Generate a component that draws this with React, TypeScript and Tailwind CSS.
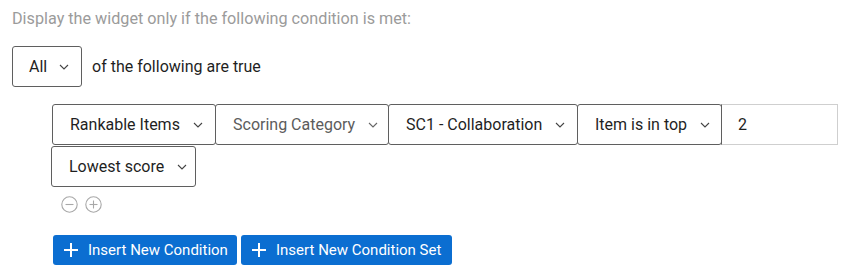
import React from "react";

const Chevron = ({ color = "#444" }: { color?: string }) => (
  <svg width="10" height="6" viewBox="0 0 10 6" className="shrink-0">
    <polyline points="1,1 5,5 9,1" fill="none" stroke={color} strokeWidth="1.1" />
  </svg>
);

const Select = ({
  label,
  width,
  muted = false,
  className = "",
}: {
  label: string;
  width: string;
  muted?: boolean;
  className?: string;
}) => (
  <div
    className={`flex items-center gap-[13px] h-[41px] pl-[17px] border border-[#5f5f5f] rounded-[3px] bg-white ${width} ${className}`}
  >
    <span className={muted ? "text-[#5c5c5c]" : "text-[#1f1f1f]"}>{label}</span>
    <Chevron color={muted ? "#666" : "#444"} />
  </div>
);

const CircleIcon = ({ plus }: { plus?: boolean }) => (
  <svg width="17" height="17" viewBox="0 0 17 17">
    <circle cx="8.5" cy="8.5" r="7.7" fill="none" stroke="#a8a8a8" strokeWidth="1.1" />
    <line x1="4.5" y1="8.5" x2="12.5" y2="8.5" stroke="#a8a8a8" strokeWidth="1.1" />
    {plus && <line x1="8.5" y1="4.5" x2="8.5" y2="12.5" stroke="#a8a8a8" strokeWidth="1.1" />}
  </svg>
);

const PlusIcon = () => (
  <svg width="14" height="14" viewBox="0 0 14 14" className="shrink-0">
    <line x1="0" y1="7" x2="14" y2="7" stroke="white" strokeWidth="2" />
    <line x1="7" y1="0" x2="7" y2="14" stroke="white" strokeWidth="2" />
  </svg>
);

export default function App() {
  return (
    <div
      className="w-[850px] h-[275px] bg-white px-[12px] pt-[9px] text-[16px]"
      style={{ fontFamily: "Roboto, 'Noto Sans', sans-serif" }}
    >
      <p className="text-[#9b9b9b] leading-[20px] text-[16.2px]">
        Display the widget only if the following condition is met:
      </p>

      <div className="flex items-center gap-[10px] mt-[17px]">
        <div className="flex items-center gap-[12px] w-[70px] h-[41px] pl-[16px] border border-[#5f5f5f] rounded-[3px] text-[#1f1f1f]">
          <span>All</span>
          <Chevron />
        </div>
        <span className="text-[#1f1f1f]">of the following are true</span>
      </div>

      <div className="ml-[40px] mt-[17px] w-[790px] flex flex-wrap gap-y-[1px]">
        <Select label="Rankable Items" width="w-[164px]" />
        <Select label="Scoring Category" width="w-[174px]" muted className="-ml-px" />
        <Select label="SC1 - Collaboration" width="w-[190px]" className="-ml-px" />
        <Select label="Item is in top" width="w-[145px]" className="-ml-px" />
        <div className="flex items-center h-[41px] w-[117px] -ml-px pl-[16px] border border-[#cfcfcf] border-l-[#5f5f5f] text-[#1f1f1f]">
          2
        </div>
        <Select label="Lowest score" width="w-[145px]" className="-ml-px" />
      </div>

      <div className="ml-[49px] mt-[9px] flex items-center gap-[7px]">
        <CircleIcon />
        <CircleIcon plus />
      </div>

      <div className="ml-[41px] mt-[22px] flex gap-[4px]">
        <button className="flex items-center gap-[10px] h-[30px] w-[184px] pl-[11px] bg-[#0b6ed1] text-white text-[15px] rounded-[3px]">
          <PlusIcon />
          Insert New Condition
        </button>
        <button className="flex items-center gap-[10px] h-[30px] w-[211px] pl-[11px] bg-[#0b6ed1] text-white text-[15px] rounded-[3px]">
          <PlusIcon />
          Insert New Condition Set
        </button>
      </div>
    </div>
  );
}
